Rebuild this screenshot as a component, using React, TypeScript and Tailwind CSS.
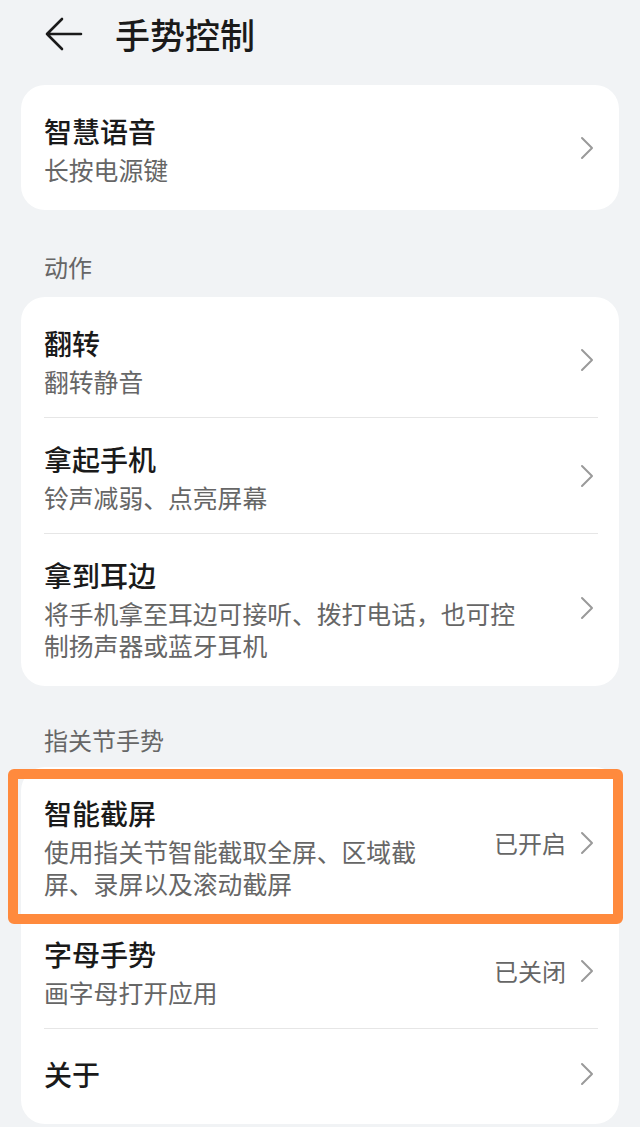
import React from 'react';

type Item = {
    title: string;
    desc?: string;
    value?: string;
    descWidth?: string;
    pb?: string;
};

const Chevron = () => (
    <svg width="14" height="24" viewBox="0 0 14 24" fill="none" className="shrink-0">
        <path d="M2 2 L12 12 L2 22" stroke="#9a9a9a" strokeWidth="2" strokeLinecap="round" strokeLinejoin="round" />
    </svg>
);

const BackArrow = () => (
    <svg width="38" height="34" viewBox="0 0 38 34" fill="none">
        <path d="M2 17 H36 M17 2 L2 17 L17 32" stroke="#1a1a1a" strokeWidth="2.6" strokeLinecap="round" strokeLinejoin="round" />
    </svg>
);

const Row: React.FC<{ item: Item; divider?: boolean }> = ({ item, divider = true }) => (
    <div className={`flex items-center ${divider ? 'border-t border-[#e6e6e6]' : ''}`}>
        <div className={`flex-1 min-w-0 ${item.desc ? 'pt-[23px]' : 'py-[27px]'} ${item.desc ? item.pb ?? 'pb-[20px]' : ''}`}>
            <div className="text-[28px] leading-[36px] font-medium text-[#1a1a1a]">{item.title}</div>
            {item.desc && (
                <div className={`mt-[4px] text-[24.8px] leading-[32px] text-[#666666] ${item.descWidth ?? ''}`}>{item.desc}</div>
            )}
        </div>
        <div className="flex items-center gap-[14px] pl-[16px] mr-[4px]">
            {item.value && <span className="text-[24px] leading-[32px] text-[#666666]">{item.value}</span>}
            <Chevron />
        </div>
    </div>
);

const Card: React.FC<{ items: Item[]; children?: React.ReactNode }> = ({ items, children }) => (
    <div className="relative bg-white rounded-[24px] pl-[23px] pr-[21px] py-[5px]">
        {items.map((item, i) => (
            <Row key={item.title} item={item} divider={i > 0 && item.title !== '字母手势'} />
        ))}
        {children}
    </div>
);

const App: React.FC = () => {
    return (
        <div className="min-h-[1127px] bg-[#f1f3f5] font-['Noto_Sans_CJK_SC','Noto_Sans',sans-serif] overflow-hidden">
            <div className="h-[74px] flex items-center pl-[45px] pb-[6px]">
                <BackArrow />
                <h1 className="ml-[32px] text-[35px] leading-[44px] font-medium text-[#1a1a1a]">手势控制</h1>
            </div>

            <div className="px-[21px] pt-[11px] pb-[10px]">
                <Card items={[{ title: '智慧语音', desc: '长按电源键' }]} />

                <div className="pl-[23px] mt-[41px] mb-[14px] text-[24px] leading-[32px] text-[#666666]">动作</div>
                <Card
                    items={[
                        { title: '翻转', desc: '翻转静音' },
                        { title: '拿起手机', desc: '铃声减弱、点亮屏幕' },
                        { title: '拿到耳边', desc: '将手机拿至耳边可接听、拨打电话，也可控制扬声器或蓝牙耳机', descWidth: 'max-w-[480px]' },
                    ]}
                />

                <div className="pl-[23px] mt-[38px] mb-[11px] text-[24px] leading-[32px] text-[#666666]">指关节手势</div>
                <Card
                    items={[
                        { title: '智能截屏', desc: '使用指关节智能截取全屏、区域截屏、录屏以及滚动截屏', value: '已开启', descWidth: 'max-w-[385px]', pb: 'pb-[14px]' },
                        { title: '字母手势', desc: '画字母打开应用', value: '已关闭' },
                        { title: '关于' },
                    ]}
                >
                    {/* highlight box drawn over the first row */}
                    <div className="absolute left-[-13px] right-[-4px] top-[2px] h-[155px] border-[10px] border-[#ff8a3d] rounded-[6px] pointer-events-none" />
                </Card>
            </div>
        </div>
    );
};

export default App;
